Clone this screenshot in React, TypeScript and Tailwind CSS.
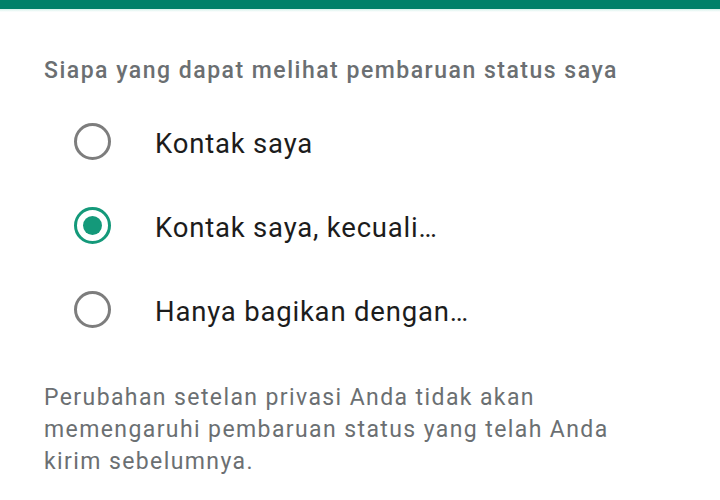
import { useState } from 'react'

const options = ['Kontak saya', 'Kontak saya, kecuali…', 'Hanya bagikan dengan…']

function Radio({ checked }: { checked: boolean }) {
  return (
    <span
      className={
        'flex h-[37px] w-[37px] shrink-0 items-center justify-center rounded-full border-[3px] ' +
        (checked ? 'border-[#14997a]' : 'border-[#7d7d7d]')
      }
    >
      {checked && <span className="h-[19px] w-[19px] rounded-full bg-[#14997a]" />}
    </span>
  )
}

export default function App() {
  const [selected, setSelected] = useState(1)

  return (
    <div className="h-[500px] w-[720px] overflow-hidden bg-white font-['Roboto',sans-serif]">
      {/* top bar */}
      <div className="h-[9px] bg-[#008069]" />
      <div className="h-[3px] bg-gradient-to-b from-[#d4f0ea] to-white" />

      <div className="pl-[44px] pt-[44px]">
        <p className="text-[23px] font-medium leading-[30px] tracking-[1.5px] text-[#6b6f72]">
          Siapa yang dapat melihat pembaruan status saya
        </p>

        <div className="mt-[13px]">
          {options.map((label, i) => (
            <button
              key={label}
              onClick={() => setSelected(i)}
              className="flex h-[84px] w-full items-center text-left"
            >
              <span className="ml-[30px]">
                <Radio checked={selected === i} />
              </span>
              <span className="ml-[44px] pt-[6px] text-[27.5px] leading-none tracking-[0.8px] text-[#1c1c1c]">
                {label}
              </span>
            </button>
          ))}
        </div>

        <p className="mt-[31px] w-[600px] text-[23px] leading-[32px] tracking-[1.4px] text-[#6b6f72]">
          Perubahan setelan privasi Anda tidak akan memengaruhi pembaruan status yang telah Anda
          kirim sebelumnya.
        </p>
      </div>
    </div>
  )
}
